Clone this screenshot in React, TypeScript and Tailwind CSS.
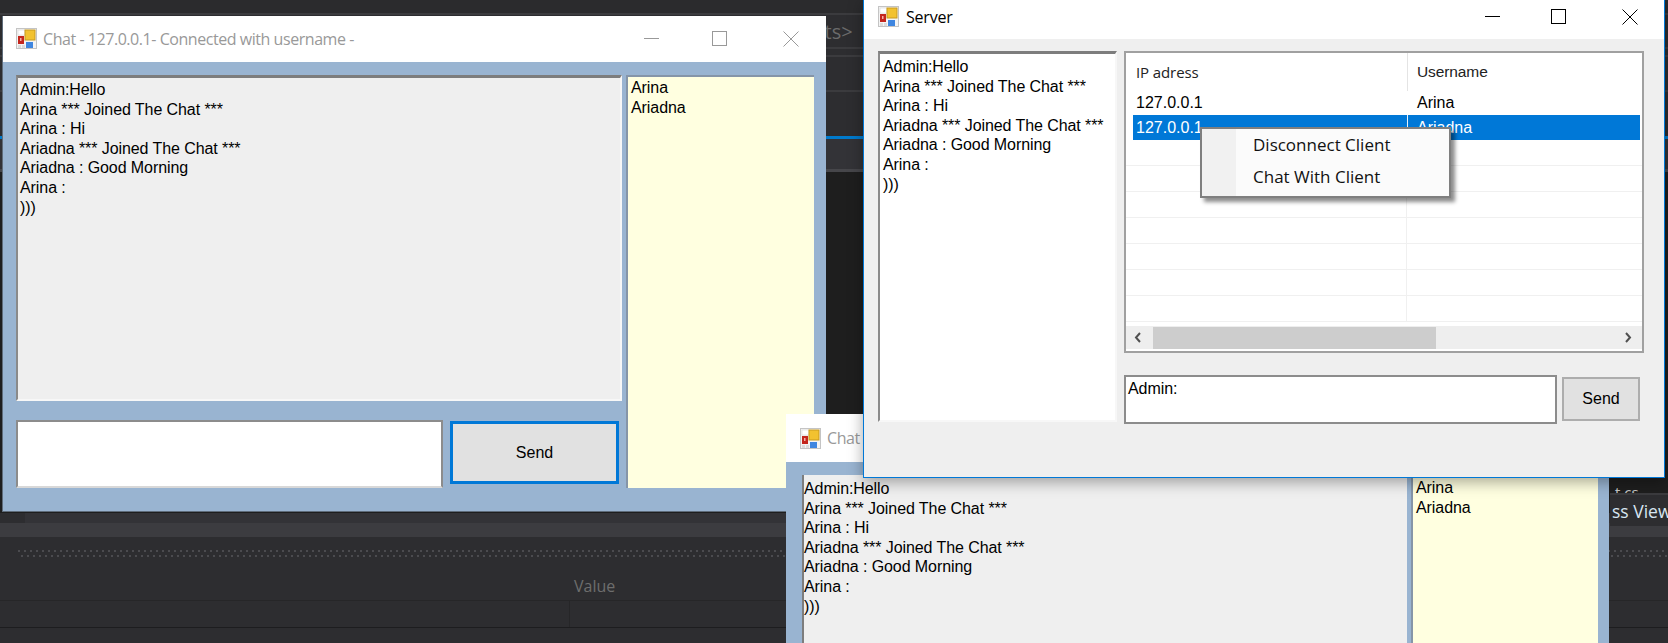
import type { ReactNode } from "react";

const chatLines = [
  "Admin:Hello",
  "Arina *** Joined The Chat ***",
  "Arina : Hi",
  "Ariadna *** Joined The Chat ***",
  "Ariadna : Good Morning",
  "Arina :",
  ")))",
];

function AppIcon() {
  return (
    <svg width="21" height="21" viewBox="0 0 21 21" className="shrink-0">
      <rect x="0.5" y="0.5" width="20" height="20" fill="#f4f4f4" stroke="#c4c4c4" />
      <rect x="2" y="2" width="7" height="5" fill="#fff" stroke="#d0d0d0" strokeWidth="0.5" />
      <rect x="9" y="2" width="10" height="10" fill="#f2c230" stroke="#c89a1e" />
      <rect x="2" y="8" width="6" height="8" fill="#c4261d" />
      <rect x="4" y="10" width="1.5" height="3" fill="#f3b0a8" />
      <rect x="10" y="14" width="7" height="6" fill="#3f86e0" />
      <rect x="2" y="17" width="3" height="3" fill="#dcdcdc" />
      <rect x="6" y="17" width="3" height="3" fill="#dcdcdc" />
    </svg>
  );
}

function Controls({ color, mode }: { color: string; mode: "chat" | "server" }) {
  return (
    <svg
      width="156"
      height="16"
      viewBox="0 0 156 16"
      fill="none"
      stroke={color}
      strokeWidth="1"
      className={mode === "chat" ? "ml-auto mr-[27px]" : "ml-auto mr-[26px]"}
    >
      <path d={mode === "chat" ? "M1 7.5H16" : "M3 7.5H18"} />
      <rect x="69.5" y="0.5" width="14" height="14" />
      <path d="M140.5 0.5L155.5 15.5M155.5 0.5L140.5 15.5" />
    </svg>
  );
}

function Lines({ items }: { items: string[] }) {
  return (
    <div className="text-[16px] leading-[19.6px] tracking-[-0.08px] text-black">
      {items.map((l) => (
        <div key={l} className="h-[19.6px] whitespace-nowrap">
          {l}
        </div>
      ))}
    </div>
  );
}

function Sunken({ className, children }: { className: string; children?: ReactNode }) {
  return (
    <div className={"border-t-[3px] border-l-2 border-r-2 border-b-2 border-t-[#7d7d7d] border-l-[#8a8a8a] border-r-[#f7f7f7] border-b-[#f7f7f7] pt-[2px] overflow-hidden " + className}>
      {children}
    </div>
  );
}

function ChatBody({ names }: { names: string[] }) {
  return (
    <div className="flex gap-[4px] pl-[13px] pt-[13px]">
      <div className="w-[606px] flex flex-col gap-[19px]">
        <Sunken className="h-[326px] bg-[#efefef] pl-[2px]">
          <Lines items={chatLines} />
        </Sunken>
        <div className="flex gap-[7px]">
          <div className="w-[427px] h-[68px] bg-white border-2 border-[#8c8c8c] border-b-[#d8d8d8]" />
          <button className="w-[169px] h-[63px] mt-px bg-[#e1e1e1] border-[3px] border-[#0078d7] text-[16px] text-black">
            Send
          </button>
        </div>
      </div>
      <div className="w-[188px] h-[413px] bg-[#ffffe0] border-t-2 border-l-2 border-[#8595a8] pl-[3px] pt-[1px]">
        <Lines items={names} />
      </div>
    </div>
  );
}

function Row() {
  return (
    <div className="flex h-[26px] border-b border-[#f0f0f0] pl-[4px]">
      <div className="w-[277px] border-r border-[#f0f0f0]" />
      <div className="flex-1" />
    </div>
  );
}

function ServerList() {
  return (
    <div className="relative h-[302px] bg-white border-2 border-[#a0a0a0] overflow-hidden text-[16px] flex flex-col">
      <div className="flex h-[38px] items-center pl-[10px] tracking-[-0.1px]">
        <div className="w-[271px] font-['Open_Sans'] text-[15px] text-[#222]">IP adress</div>
        <div className="border-l border-[#e4e4e4] h-full flex items-center pl-[9px] text-[15.5px] text-[#222]">Username</div>
      </div>
      <div className="flex h-[24px] items-center pl-[10px] text-black">
        <div className="w-[272px]">127.0.0.1</div>
        <div className="pl-[9px]">Arina</div>
      </div>
      <div className="flex h-[25px] ml-[7px] mr-[2px] items-center bg-[#0078d7] pl-[3px] text-white">
        <div className="w-[272px] border-r border-[#e8f2fb] h-full flex items-center">127.0.0.1</div>
        <div className="pl-[9px]">Ariadna</div>
      </div>
      <Row />
      <Row />
      <Row />
      <Row />
      <Row />
      <Row />
      <Row />
      <div className="absolute bottom-[2px] left-0 right-0 h-[23px] bg-[#eeeeee] flex items-center">
        <svg width="27" height="23" viewBox="0 0 27 23" fill="none" stroke="#505050" strokeWidth="2" className="shrink-0">
          <path d="M14 7L10 11.5L14 16" />
        </svg>
        <div className="w-[283px] h-[22px] bg-[#cdcdcd]" />
        <svg width="27" height="23" viewBox="0 0 27 23" fill="none" stroke="#505050" strokeWidth="2" className="ml-auto shrink-0">
          <path d="M11 7L15 11.5L11 16" />
        </svg>
      </div>
    </div>
  );
}

export default function App() {
  return (
    <div className="relative w-[1668px] h-[643px] overflow-hidden bg-[#1e1e1e] font-['Liberation_Sans',Arial,sans-serif]">
      {/* dark IDE behind the windows */}
      <div className="flex flex-col">
        <div className="h-[13px] bg-[#2b2b2d]" />
        <div className="h-[34px] bg-[#2d2d30] border-t-2 border-[#3b3b3e] pl-[815px] text-[20px] leading-[34px] text-[#6b6b6b] font-['Open_Sans']">
          cts&gt;
        </div>
        <div className="h-[8px] bg-[#2d2d30] border-t-2 border-[#3b3b3e]" />
        <div className="h-[35px] bg-[#2d2d30] border-t-2 border-[#3b3b3e]" />
        <div className="h-[46px] bg-[#2d2d30] border-t-2 border-[#3b3b3e]" />
        <div className="h-[3px] bg-[#007acc]" />
        <div className="h-[30px] bg-[#333337]" />
        <div className="h-[3px] bg-[#46464a]" />
        <div className="h-[341px] bg-[#1e1e1e]" />
        <div className="h-[10px] bg-[#333337]">
          <div className="w-[25px] h-full bg-[#2d2d30]" />
        </div>
        <div className="h-[14px] bg-[#3c3c40]" />
        <div className="h-[63px] bg-[#2d2d30] pt-[13px] flex flex-col gap-[3px] pl-[18px]">
          <div className="h-[2px] bg-[repeating-linear-gradient(90deg,#4b4b4f_0_2px,transparent_2px_6px)]" />
          <div className="h-[2px] ml-[3px] bg-[repeating-linear-gradient(90deg,#4b4b4f_0_2px,transparent_2px_6px)]" />
        </div>
        <div className="h-[27px] bg-[#2d2d30] border-t border-[#262628] pl-[569px]">
          <div className="h-full border-l border-[#262628]" />
        </div>
        <div className="h-[16px] bg-[#2d2d30] border-t border-[#1d1d1f]" />
      </div>

      <div className="absolute left-[574px] top-[574px] text-[16px] font-['Open_Sans'] text-[#6d6d6d]">Value</div>

      {/* tab on the right edge */}
      <div className="absolute left-[1615px] top-[483px] text-[15px] leading-[18px] text-[#c8c8c8] font-['Open_Sans']">
        t cs
      </div>
      <div className="absolute left-[1610px] top-[493px] w-[58px] h-[33px] bg-[#2d2d30] border-t-2 border-[#3b3b3e] pl-[2px]">
        <div className="text-[17.5px] leading-[33px] whitespace-nowrap text-[#d8e6f2] font-['Open_Sans']">ss View</div>
      </div>
      <div className="absolute left-[1610px] top-[526px] w-[58px] h-[11px] bg-[#3c3c40]" />

      {/* first client */}
      <div className="absolute left-[2px] top-[16px] w-[824px] h-[496px] bg-[#99b4d1] border-b border-l border-[#5f6c7a]">
        <div className="flex items-center h-[46px] bg-white pl-[13px] pb-px gap-[6px] text-[#999999] font-['Open_Sans']">
          <AppIcon />
          <span className="text-[16px] tracking-[-0.45px]">Chat - 127.0.0.1- Connected with username -</span>
          <Controls color="#999999" mode="chat" />
        </div>
        <ChatBody names={["Arina", "Ariadna"]} />
      </div>

      {/* second client, most of it under the server */}
      <div className="absolute left-[786px] top-[414px] w-[823px] h-[496px] bg-[#99b4d1]">
        <div className="flex items-center h-[48px] bg-white pl-[14px] gap-[6px] text-[#999999] font-['Open_Sans']">
          <AppIcon />
          <span className="text-[16px] tracking-[-0.45px]">Chat - 127.0.0.1- Connected with username -</span>
        </div>
        <div className="flex gap-[4px] pl-[16px] pt-[13px]">
          <div className="w-[605px] h-[327px] bg-[#efefef] border-l-2 border-[#7d7d7d]">
            <div className="pt-[4px]">
              <Lines items={chatLines} />
            </div>
          </div>
          <div className="w-[187px] h-[300px] bg-[#ffffe0] border-l-2 border-[#8595a8] pl-[3px] pt-[3px]">
            <Lines items={["Arina", "Ariadna"]} />
          </div>
        </div>
      </div>

      {/* server */}
      <div className="absolute left-[863px] top-0 w-[802px] h-[478px] bg-[#efefef] border-x border-b border-[#0078d7] shadow-[0_4px_14px_rgba(0,0,0,0.35)]">
        <div className="flex items-center h-[39px] bg-white pl-[14px] gap-[7px] text-black font-['Open_Sans'] pb-[7px] pt-px">
          <AppIcon />
          <span className="text-[16px] tracking-[-0.2px]">Server</span>
          <Controls color="#000000" mode="server" />
        </div>
        <div className="flex gap-[7px] pl-[14px] pt-[12px]">
          <Sunken className="w-[239px] h-[371px] bg-white pl-[3px]">
            <div className="pt-px">
              <Lines items={chatLines} />
            </div>
          </Sunken>
          <div className="w-[520px] flex flex-col gap-[22px]">
            <ServerList />
            <div className="flex gap-[5px]">
              <div className="w-[433px] h-[49px] bg-white border-2 border-[#8c8c8c] pl-[2px] pt-[2px] text-[16px] leading-[19.6px] tracking-[-0.08px] text-black">
                Admin:
              </div>
              <button className="w-[78px] h-[44px] mt-[2px] bg-[#e1e1e1] border-2 border-[#adadad] text-[16px] text-black">
                Send
              </button>
            </div>
          </div>
        </div>
      </div>

      {/* context menu */}
      <div className="absolute left-[1200px] top-[127px] w-[251px] h-[71px] bg-[#fbfbfb] border-2 border-[#7f7f7f] shadow-[4px_4px_4px_rgba(0,0,0,0.45)] flex text-[17px] text-[#111] font-['Open_Sans']">
        <div className="w-[34px] bg-[#f1f1f1]" />
        <div className="pl-[17px] flex flex-col pt-[4px] gap-[8px]">
          <div className="leading-[24px]">Disconnect Client</div>
          <div className="leading-[24px]">Chat With Client</div>
        </div>
      </div>
    </div>
  );
}
